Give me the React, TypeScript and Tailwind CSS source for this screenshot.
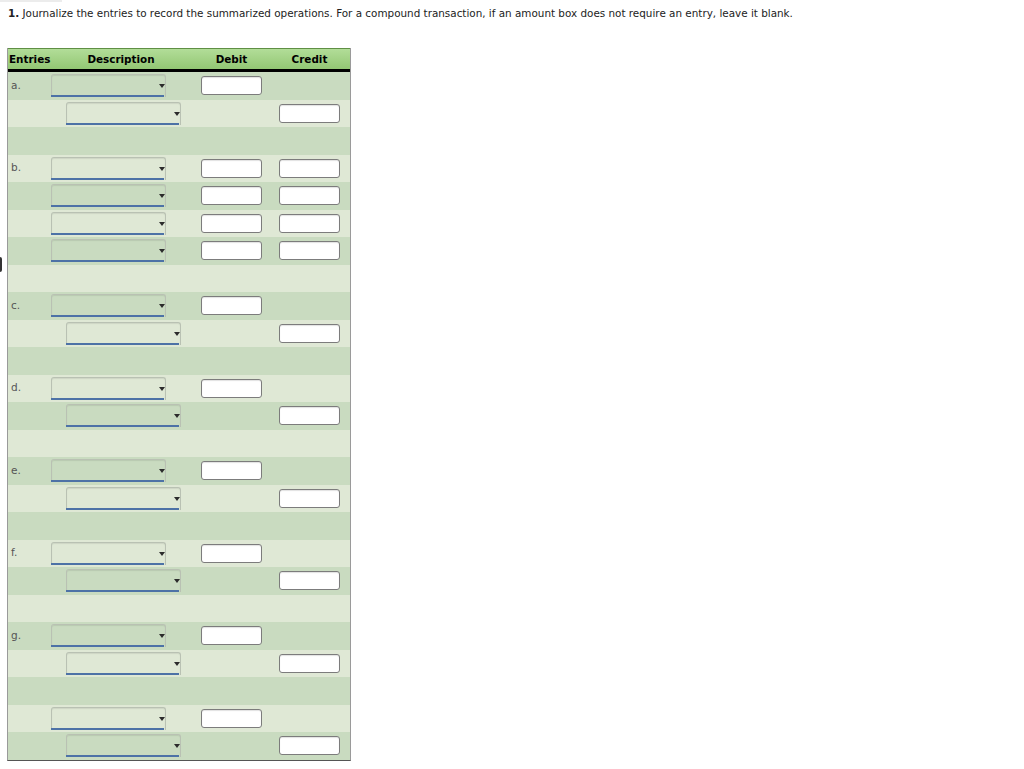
import React from "react";

type Line = {
  label?: string;
  indent?: boolean;
  debit?: boolean;
  credit?: boolean;
  blank?: boolean;
};

// each transaction: debit line(s), credit line(s), then an empty spacer row
const pair = (label?: string): Line[] => [
  { label, debit: true },
  { indent: true, credit: true },
];

const LINES: Line[] = [
  ...pair("a."),
  { blank: true },
  { label: "b.", debit: true, credit: true },
  { debit: true, credit: true },
  { debit: true, credit: true },
  { debit: true, credit: true },
  { blank: true },
  ...pair("c."),
  { blank: true },
  ...pair("d."),
  { blank: true },
  ...pair("e."),
  { blank: true },
  ...pair("f."),
  { blank: true },
  ...pair("g."),
  { blank: true },
  ...pair(),
];

const font = { fontFamily: '"DejaVu Sans", Verdana, sans-serif' };

function Dropdown({ indent }: { indent?: boolean }) {
  return (
    <div
      className={
        "relative h-[23px] w-[115px] rounded-t-[3px] border border-b-0 border-[#b9c1b3] shadow-[inset_0_1px_1px_rgba(0,0,0,0.08)] " +
        (indent ? "ml-[15px]" : "ml-0")
      }
    >
      <div className="absolute right-[1px] bottom-0 left-[-1px] h-[2px] bg-[#4d72a6]" />
      <div className="absolute top-[9px] right-0 h-0 w-0 border-t-[4px] border-r-[3px] border-l-[3px] border-t-[#2b2b2b] border-r-transparent border-l-transparent" />
    </div>
  );
}

function Amount() {
  return (
    <div className="h-[19px] w-[61px] rounded-[3px] border border-[#7c7c7c] bg-white shadow-[inset_0_1px_1px_rgba(0,0,0,0.12)]" />
  );
}

function Row({ line, index }: { line: Line; index: number }) {
  const bg = index % 2 === 0 ? "bg-[#c9dbc0]" : "bg-[#dfe8d5]";
  return (
    <div className={`flex h-[27.5px] items-center ${bg}`}>
      <div className="w-[43px] pl-[3px] text-[10.5px] text-[#555]">{line.label}</div>
      <div className="w-[150px]">{!line.blank && <Dropdown indent={line.indent} />}</div>
      <div className="w-[78px]">{line.debit && <Amount />}</div>
      <div className="w-[61px]">{line.credit && <Amount />}</div>
    </div>
  );
}

export default function App() {
  return (
    <div className="relative min-h-[769px] w-[1024px] bg-white text-black" style={font}>
      <div className="h-[2px] w-[62px] bg-[#ececec]" />
      <p className="mt-[4px] pl-[8px] text-[10.4px] leading-[14px] text-[#222]">
        <b>1.</b> Journalize the entries to record the summarized operations. For a compound
        transaction, if an amount box does not require an entry, leave it blank.
      </p>

      <div className="mt-[28px] ml-[7px] w-[344px] border-r border-b border-l border-r-[#9a9a9a] border-b-[#555] border-l-[#9a9a9a]">
        <div className="flex h-[24px] items-center border-t border-b-[3px] border-t-[#5f8f45] border-b-black bg-linear-to-b from-[#b2dd98] to-[#93c774] pt-[1px] text-[10.4px] font-bold">
          <div className="w-[43px] pl-[1px]">Entries</div>
          <div className="w-[150px] pr-[10px] text-center">Description</div>
          <div className="w-[61px] text-center">Debit</div>
          <div className="w-[17px]" />
          <div className="w-[61px] text-center">Credit</div>
        </div>
        {LINES.map((line, i) => (
          <Row key={i} line={line} index={i} />
        ))}
      </div>

      <div className="absolute top-[257px] left-0 h-[15px] w-[2px] rounded-r bg-[#333]" />
    </div>
  );
}
